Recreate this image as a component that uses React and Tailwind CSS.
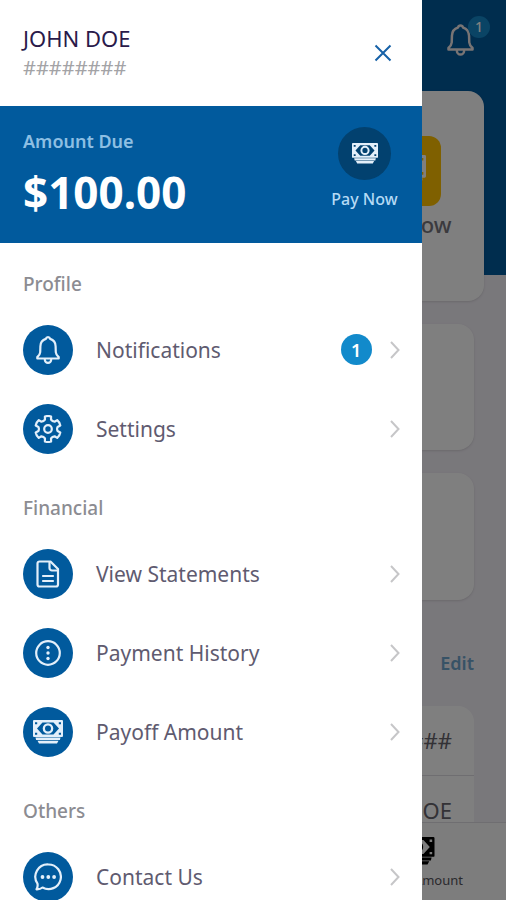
import React from "react";

function Bell({ className }) {
  return (
    <svg viewBox="0 0 24 28" className={className} fill="none" stroke="currentColor" strokeWidth="2.2" strokeLinejoin="round" strokeLinecap="round" aria-hidden="true">
      <path d="M12 1.200c1.100 0 1.900.6 2.200 1.700 3.700 1.200 5.300 3.900 5.400 7.300l.2 6c.1 1.800 1 3.100 2.900 4.900v1.400H1.300v-1.400c1.900-1.800 2.800-3.100 2.900-4.900l.2-6c.1-3.400 1.700-6.100 5.400-7.300.3-1.100 1.100-1.700 2.200-1.700z" />
      <path d="M8.800 23.500a3.200 3.400 0 0 0 6.400 0" />
    </svg>
  );
}

function gearPath() {
  const at = (r, deg) => {
    const a = ((deg - 90) * Math.PI) / 180;
    return `${(14 + r * Math.cos(a)).toFixed(2)} ${(14 + r * Math.sin(a)).toFixed(2)}`;
  };
  let d = "";
  for (let t = 0; t < 360; t += 60) {
    d += `${t === 0 ? "M" : "Q "}${t === 0 ? at(9.8, t - 18) : `${at(8.6, t - 30)} ${at(9.8, t - 18)}`} L${at(12.8, t - 14)} Q ${at(13.6, t)} ${at(12.8, t + 14)} L${at(9.8, t + 18)} `;
  }
  return `${d}Q ${at(8.6, 330)} ${at(9.8, 342)} Z`;
}

function Gear({ className }) {
  return (
    <svg viewBox="0 0 28 28" className={className} fill="none" stroke="currentColor" strokeWidth="2.2" strokeLinejoin="round" aria-hidden="true">
      <path d={gearPath()} />
      <circle cx="14" cy="14" r="3.800" />
    </svg>
  );
}

function Statement({ className }) {
  return (
    <svg viewBox="0 0 24 28" className={className} fill="none" stroke="currentColor" strokeWidth="2.2" strokeLinejoin="round" strokeLinecap="round" aria-hidden="true">
      <path d="M3.500 1.500h11L22 9V24.500a2 2 0 0 1-2 2H3.500a2 2 0 0 1-2-2V3.500a2 2 0 0 1 2-2z" />
      <path d="M13.500 2v6a2.500 2.500 0 0 0 2.500 2.500h5.500M7 16h10M7 21h10" />
    </svg>
  );
}

function History({ className }) {
  return (
    <svg viewBox="0 0 28 28" className={className} aria-hidden="true">
      <circle cx="14" cy="14" r="11.800" fill="none" stroke="currentColor" strokeWidth="2.2" />
      <circle cx="14" cy="8.500" r="1.700" fill="currentColor" />
      <circle cx="14" cy="14" r="1.700" fill="currentColor" />
      <circle cx="14" cy="19.500" r="1.700" fill="currentColor" />
    </svg>
  );
}

function Cash({ className }) {
  return (
    <svg viewBox="0 0 30 24" className={className} fill="currentColor" aria-hidden="true">
      <path
        fillRule="evenodd"
        d="M1 0h28a1 1 0 0 1 1 1v15a1 1 0 0 1-1 1H1a1 1 0 0 1-1-1V1a1 1 0 0 1 1-1z
           M9.500 2.500 4 8.500l5.500 6h11l5.500-6-5.500-6z
           M15 3.200a5.300 5.300 0 1 1 0 10.600 5.300 5.300 0 0 1 0-10.600z
           M15 5.500a3 3 0 1 0 0 6 3 3 0 0 0 0-6z
           M2 2.200h2.200v2H2z M25.800 2.200H28v2h-2.200z M2 12.800h2.200v2H2z M25.800 12.800H28v2h-2.200z"
      />
      <path d="M2.500 17.600h25l-.6 2.500H3.100zM4.500 20.700h21l-1.500 2.900H6z" />
    </svg>
  );
}

function Chat({ className }) {
  return (
    <svg viewBox="0 0 28 28" className={className} aria-hidden="true">
      <path d="M14.500 1.500a12.300 12.300 0 1 1-6 23c-1.600 1.300-3.600 1.900-6 1.800 1-1.600 1.400-3.500 1-5.600A12.300 12.300 0 0 1 14.500 1.500z" fill="none" stroke="currentColor" strokeWidth="2.2" strokeLinejoin="round" />
      <circle cx="8.500" cy="14" r="1.900" fill="currentColor" />
      <circle cx="14.300" cy="14" r="1.900" fill="currentColor" />
      <circle cx="20.100" cy="14" r="1.900" fill="currentColor" />
    </svg>
  );
}

function Chevron() {
  return (
    <svg viewBox="0 0 10 18" className="h-[18px] w-[10px] shrink-0 text-[#c6c6c8]" fill="none" stroke="currentColor" strokeWidth="2" aria-hidden="true">
      <path d="m1 1 7.500 8L1 17" />
    </svg>
  );
}

const sections = [
  {
    title: "Profile",
    items: [
      { label: "Notifications", icon: <Bell className="h-7 w-6" />, badge: "1" },
      { label: "Settings", icon: <Gear className="size-7" /> },
    ],
  },
  {
    title: "Financial",
    items: [
      { label: "View Statements", icon: <Statement className="h-7 w-6" /> },
      { label: "Payment History", icon: <History className="size-7" /> },
      { label: "Payoff Amount", icon: <Cash className="h-6 w-[30px]" /> },
    ],
  },
  {
    title: "Others",
    items: [{ label: "Contact Us", icon: <Chat className="size-7" /> }],
  },
];

function MenuRow({ item }) {
  return (
    <li>
      <a href="#" className="flex h-[79px] items-center pr-[22px] pl-[23px]">
        <span className="flex size-[50px] shrink-0 items-center justify-center rounded-full bg-[#015a9d] text-[#e3effa]">
          {item.icon}
        </span>
        <span className="ml-[23px] grow text-[21px] leading-7 text-[#5f5b70]">{item.label}</span>
        {item.badge && (
          <span className="mr-[18px] flex size-[31px] items-center justify-center rounded-full bg-[#128acb] text-lg font-semibold text-white">
            {item.badge}
          </span>
        )}
        <Chevron />
      </a>
    </li>
  );
}

function Drawer() {
  return (
    <aside className="absolute inset-y-0 left-0 w-5/6 overflow-y-auto bg-white [scrollbar-width:none]">
      <header className="flex h-[106px] items-center justify-between pr-[30px] pl-[23px]">
        <div className="text-[#2a1a4a]">
          <p className="text-[22px] leading-[30px]">JOHN DOE</p>
          <p className="text-xl leading-[30px] text-[#a3a3a6]">########</p>
        </div>
        <button type="button" aria-label="Close menu" className="text-[#1762a8]">
          <svg viewBox="0 0 18 18" className="size-[18px]" fill="none" stroke="currentColor" strokeWidth="2" aria-hidden="true">
            <path d="m1.500 1.500 15 15M16.500 1.500l-15 15" />
          </svg>
        </button>
      </header>
      <section className="flex h-[137px] items-start justify-between bg-[#015a9d] pt-[21px] pr-6 pl-[23px]">
        <div>
          <p className="text-lg leading-7 font-semibold text-[#8dbfe3]">Amount Due</p>
          <p className="mt-[7px] text-[44px] leading-[60px] font-bold text-white">$100.00</p>
        </div>
        <button type="button" className="flex flex-col items-center gap-[7px] text-base font-medium text-[#b5daf5]">
          <span className="flex size-[53px] items-center justify-center rounded-full bg-[#02416f] text-[#e3effa]">
            <Cash className="h-[21px] w-[26px]" />
          </span>
          Pay Now
        </button>
      </section>
      <nav className="pt-px">
        {sections.map((s) => (
          <section key={s.title}>
            <h2 className="px-[23px] pt-7 pb-[14px] text-[19px] leading-6 font-medium text-[#8c8c92]">{s.title}</h2>
            <ul>
              {s.items.map((item) => (
                <MenuRow key={item.label} item={item} />
              ))}
            </ul>
          </section>
        ))}
      </nav>
    </aside>
  );
}

function HomePage() {
  return (
    <div className="flex h-full flex-col bg-[#f3f0f7]">
      <div className="bg-[#015a9d]">
        <header className="flex h-[91px] items-start justify-end pt-6 pr-8 text-[#f0e8e8]">
          <div className="relative">
            <Bell className="h-8 w-[27px]" />
            <span className="absolute -top-2 left-[21px] flex size-[22px] items-center justify-center rounded-full bg-[#1489ca] text-sm font-medium text-white">1</span>
          </div>
        </header>
        <div className="mx-[22px] -mb-[26px] h-[210px] rounded-2xl bg-white shadow-sm">
          <div className="ml-auto flex w-[156px] flex-col items-center gap-1 pt-[45px]">
            <span className="flex size-[70px] items-center justify-center rounded-xl bg-[#ffc000] text-white">
              <Cash className="h-8 w-10" />
            </span>
            <span className="text-[22px] leading-7 font-medium text-[#77757c]">Pay Now</span>
          </div>
        </div>
      </div>
      <main className="flex min-h-0 grow flex-col px-8 pt-[49px]">
        <div className="h-[126px] shrink-0 rounded-2xl bg-white shadow-sm" />
        <div className="mt-[23px] h-[127px] shrink-0 rounded-2xl bg-white shadow-sm" />
        <a href="#" className="mt-12 self-end text-lg leading-[30px] font-semibold text-[#6fa5cc]">Edit</a>
        <dl className="mt-7 shrink-0 rounded-t-2xl bg-white px-[22px] text-right text-[22px] leading-[69px] text-[#66646c]">
          <dd className="-mx-[22px] border-b border-[#dedce2] px-[22px]">########</dd>
          <dd>JOHN DOE</dd>
        </dl>
      </main>
      <footer className="relative flex h-[78px] shrink-0 flex-col items-end border-t border-[#dedce2] bg-[#fafafa] pt-[14px] pr-[43px] text-[13px] text-[#55535a]">
        <span className="flex flex-col items-center gap-1.5">
          <Cash className="h-7 w-9 text-black" />
          Payoff Amount
        </span>
      </footer>
    </div>
  );
}

export default function App() {
  return (
    <div className="relative h-screen overflow-hidden font-['Noto_Sans','Open_Sans',sans-serif]">
      <HomePage />
      <div className="absolute inset-0 bg-black/50" />
      <Drawer />
    </div>
  );
}
